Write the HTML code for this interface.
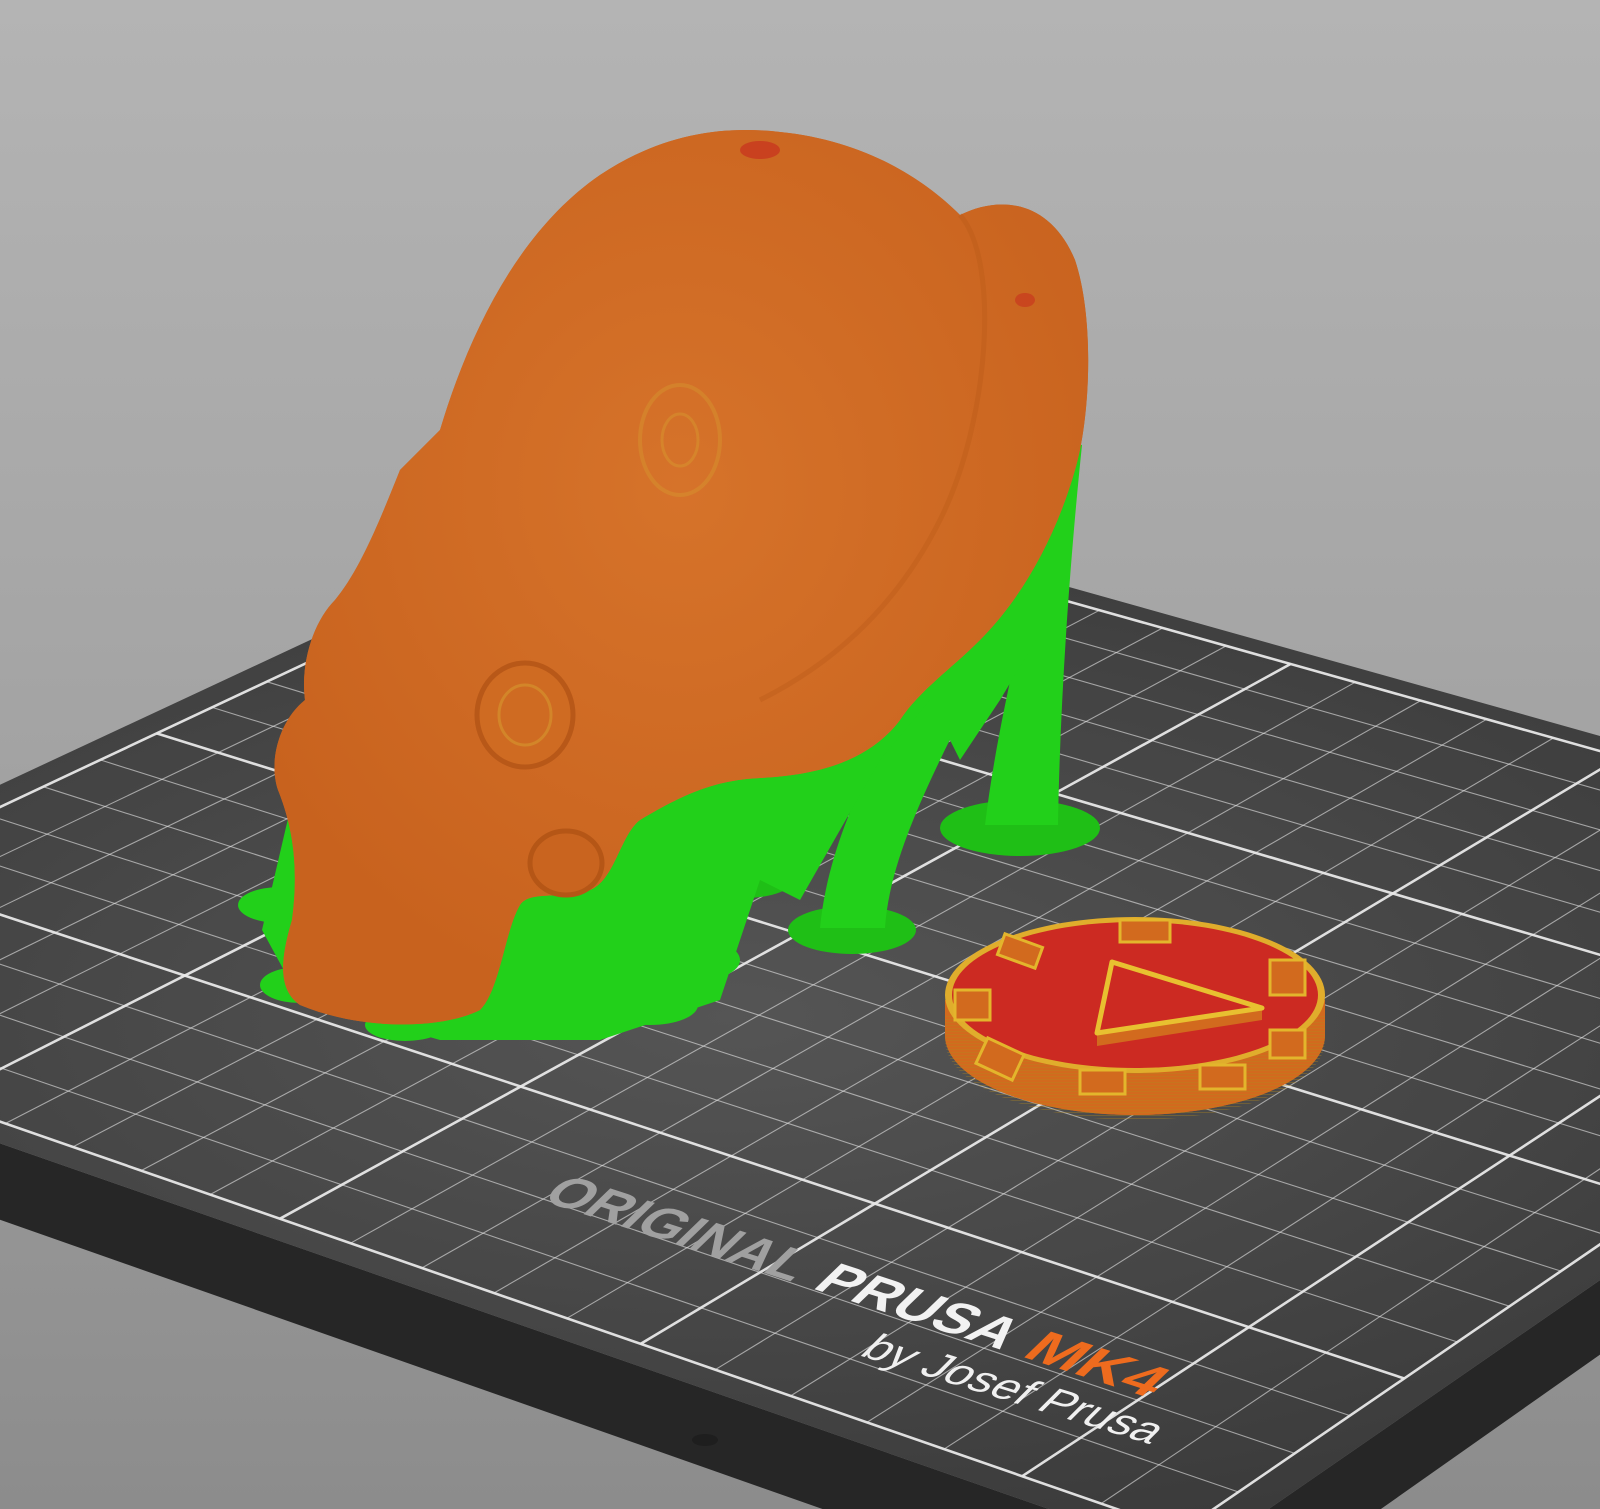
<!DOCTYPE html>
<html><head><meta charset="utf-8"><style>
html,body{margin:0;padding:0;width:1600px;height:1509px;overflow:hidden;background:#9a9a9a}
svg{display:block}
</style></head><body>
<svg id="s" width="1600" height="1509" viewBox="0 0 1600 1509" xmlns="http://www.w3.org/2000/svg">
<defs>
<linearGradient id="bg" x1="0" y1="0" x2="0" y2="1">
<stop offset="0" stop-color="#b4b4b4"/><stop offset="0.5" stop-color="#a3a3a3"/><stop offset="1" stop-color="#8c8c8c"/>
</linearGradient>
<radialGradient id="plate" cx="0.45" cy="0.5" r="0.55">
<stop offset="0" stop-color="#555555"/><stop offset="1" stop-color="#383838"/>
</radialGradient>
<radialGradient id="head" cx="0.5" cy="0.4" r="0.6">
<stop offset="0" stop-color="#d6732a"/><stop offset="1" stop-color="#c8621e"/>
</radialGradient>
<pattern id="lines" width="4" height="3" patternUnits="userSpaceOnUse">
<rect y="2" width="4" height="1" fill="#b0861c" opacity="0.35"/>
</pattern>
</defs>
<rect width="1600" height="1509" fill="url(#bg)"/>
<polygon points="-440,990 1195,1560 2160,893 2160,960 1195,1640 -440,1065" fill="#262626"/>
<polygon points="666,474 2160,893 1195,1560 -440,990" fill="url(#plate)"/>
<g id="grid" stroke="#e8e8e8" fill="none"></g>
<g font-family="Liberation Sans, sans-serif" font-weight="bold" font-size="56">
<g transform="translate(540,1200) rotate(18) skewX(-28) scale(1,0.85)">
<text x="0" y="0" fill="#a0a0a0" textLength="265" lengthAdjust="spacingAndGlyphs">ORIGINAL</text>
<text x="285" y="0" fill="#f2f2f2" textLength="200" lengthAdjust="spacingAndGlyphs">PRUSA</text>
<text x="505" y="0" fill="#ee6b1e" textLength="135" lengthAdjust="spacingAndGlyphs">MK4</text>
</g>
<g transform="translate(858,1355) rotate(17) skewX(-28) scale(1,0.85)">
<text x="0" y="0" fill="#f0f0f0" font-size="46" font-weight="normal" textLength="305" lengthAdjust="spacingAndGlyphs">by Josef Prusa</text>
</g>
</g>
<ellipse cx="705" cy="1440" rx="13" ry="6" fill="#1e1e1e"/>

<g fill="#22d01a">
<ellipse cx="1020" cy="828" rx="80" ry="28" fill="#1fbf16"/>
<ellipse cx="852" cy="930" rx="64" ry="24" fill="#1fbf16"/>
<ellipse cx="745" cy="878" rx="50" ry="20" fill="#1fbf16"/>
<ellipse cx="280" cy="905" rx="42" ry="18"/>
<ellipse cx="300" cy="985" rx="40" ry="18"/>
<ellipse cx="405" cy="1025" rx="40" ry="16"/>
<ellipse cx="550" cy="1012" rx="40" ry="16"/>
<ellipse cx="650" cy="1005" rx="48" ry="20"/>
<ellipse cx="700" cy="960" rx="40" ry="20"/>
<path d="M985,825 C1000,700 1040,560 1065,440 L1082,445 C1070,560 1060,700 1058,825 Z"/>
<path d="M820,928 C830,820 900,700 960,640 L990,660 C940,760 890,850 885,928 Z"/>
<path d="M700,790 L900,650 L1065,440 L1080,460 L1060,600 L1000,700 L960,760 L930,700 L880,760 L800,900 L760,880 L720,1000 L600,1040 L440,1040 L300,1000 L262,930 L290,810 L330,800 Z"/>
</g>

<path id="oct" d="M440,430 C470,330 520,230 600,175 C660,135 720,125 780,132 C860,140 920,175 960,215 C1000,195 1050,200 1075,260 C1095,320 1090,420 1075,470 C1055,540 1020,600 980,640 C950,670 920,690 900,720 C870,760 820,775 760,778 C720,780 690,790 640,820 C620,835 615,880 590,890 C560,900 530,890 520,905 C505,930 500,990 480,1010 C440,1030 360,1030 300,1005 C278,990 280,960 292,920 C300,860 290,820 278,790 C268,760 280,720 305,700 C300,660 315,620 335,600 C360,570 380,520 400,470 Z" fill="url(#head)"/>
<use href="#oct" fill="url(#lines)"/>
<path d="M960,215 C1000,260 990,420 940,520 C900,600 840,660 760,700" stroke="#b85818" stroke-width="5" fill="none" opacity="0.35"/>
<ellipse cx="680" cy="440" rx="40" ry="55" fill="none" stroke="#d8a030" stroke-width="4" opacity="0.35"/>
<ellipse cx="680" cy="440" rx="18" ry="26" fill="none" stroke="#d8a030" stroke-width="3" opacity="0.4"/>
<ellipse cx="760" cy="150" rx="20" ry="9" fill="#c8301e" opacity="0.7"/>
<ellipse cx="1025" cy="300" rx="10" ry="7" fill="#c8301e" opacity="0.6"/>
<ellipse cx="525" cy="715" rx="48" ry="52" fill="#cf6b22" stroke="#b85818" stroke-width="5"/>
<ellipse cx="525" cy="715" rx="26" ry="30" fill="none" stroke="#d8a030" stroke-width="3" opacity="0.5"/>
<ellipse cx="566" cy="863" rx="36" ry="32" fill="#c9641f" stroke="#b55616" stroke-width="5"/>

<path d="M945,1000 L945,1035 A190,80 0 0 0 1325,1035 L1325,1000 Z" fill="#d26a1e"/>
<ellipse cx="1135" cy="1035" rx="190" ry="80" fill="#d26a1e"/>
<path d="M945,1015 L945,1040 A190,80 0 0 0 1325,1040 L1325,1015" fill="url(#lines)"/>
<ellipse cx="1135" cy="995" rx="190" ry="78" fill="#e0ad2c"/>
<ellipse cx="1135" cy="995" rx="183" ry="73" fill="#cc2a22"/>
<g fill="#d26a1e" stroke="#e3b52c" stroke-width="3">
<rect x="1000" y="940" width="40" height="22" transform="rotate(20 1020 951)"/>
<rect x="1120" y="920" width="50" height="22"/>
<rect x="1270" y="960" width="35" height="35"/>
<rect x="955" y="990" width="35" height="30"/>
<rect x="980" y="1045" width="40" height="28" transform="rotate(25 1000 1059)"/>
<rect x="1080" y="1070" width="45" height="24"/>
<rect x="1200" y="1065" width="45" height="24"/>
<rect x="1270" y="1030" width="35" height="28"/>
</g>
<polygon points="1097,1033 1112,962 1262,1008 1262,1020 1097,1046" fill="#d26a1e"/>
<polygon points="1097,1033 1112,962 1262,1008" fill="#cc2a22" stroke="#e8c030" stroke-width="5" stroke-linejoin="round"/>
</svg>
<script>
(function(){
var g=document.getElementById('grid');
var P0=[666,474],P1=[2160,893],P2=[1195,1560],P3=[-440,990];
var x0=P0[0],y0=P0[1],x1=P1[0],y1=P1[1],x2=P2[0],y2=P2[1],x3=P3[0],y3=P3[1];
var dx1=x1-x2,dx2=x3-x2,dy1=y1-y2,dy2=y3-y2,sx=x0-x1+x2-x3,sy=y0-y1+y2-y3;
var den=dx1*dy2-dx2*dy1;
var G=(sx*dy2-dx2*sy)/den,H=(dx1*sy-sx*dy1)/den;
var a=x1-x0+G*x1,b=x3-x0+H*x3,c=x0,d=y1-y0+G*y1,e=y3-y0+H*y3,f=y0;
function P(u,v){var w=G*u+H*v+1;return [(a*u+b*v+c)/w,(d*u+e*v+f)/w];}
var m=0.02,NU=22,NV=19,s='';
function L(p,q,w,op){s+='<line x1="'+p[0].toFixed(1)+'" y1="'+p[1].toFixed(1)+'" x2="'+q[0].toFixed(1)+'" y2="'+q[1].toFixed(1)+'" stroke-width="'+w+'" opacity="'+op+'"/>';}
for(var i=0;i<=NU;i++){
 var u=m+(1-2*m)*i/NU, mj=(i%5==0||i==NU);
 L(P(u,m),P(u,1-m),mj?2.6:1.1,mj?0.95:0.6);
}
for(var j=0;j<=NV;j++){
 var v=m+(1-2*m)*j/NV, mj=(j%5==0||j==NV);
 L(P(m,v),P(1-m,v),mj?2.6:1.1,mj?0.95:0.6);
}
g.innerHTML=s;
})();
</script>
</body></html>
